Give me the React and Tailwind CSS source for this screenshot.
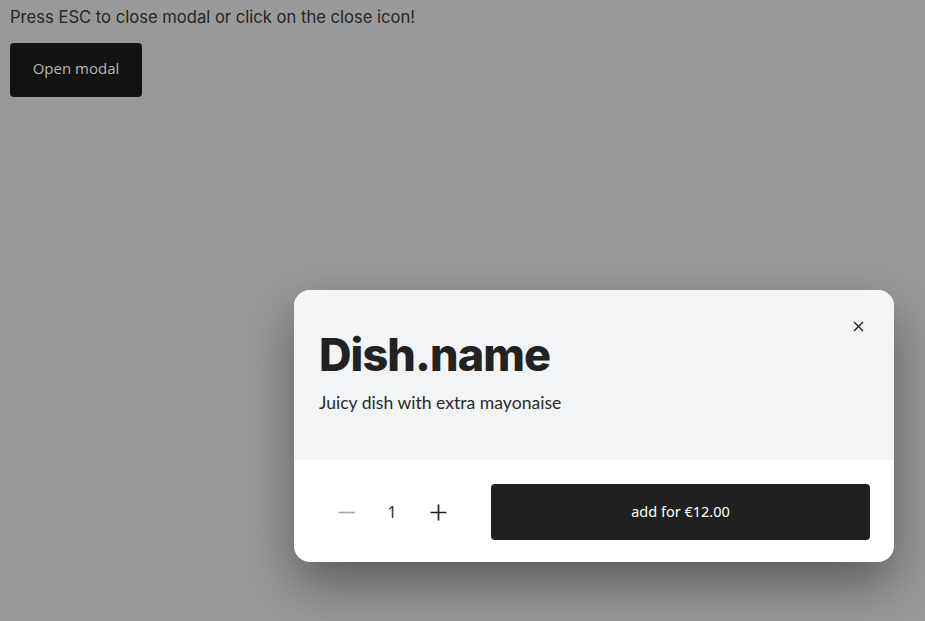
import React from "react";

export default function App() {
  return (
    <div className="relative min-h-[621px] w-full bg-[#999999] px-[10px] pt-[6px]">
      {/* PAGE CONTENT (behind overlay) */}
      <p
        className="text-[16.6px] leading-[22px] text-[#262626]"
        style={{ fontFamily: "Inter, sans-serif" }}
      >
        Press ESC to close modal or click on the close icon!
      </p>
      <button
        className="mt-[15px] flex h-[54px] w-[132px] items-center justify-center rounded bg-[#131313] pb-[3px] text-[15px] text-[#b8b8b8]"
        style={{ fontFamily: "'Open Sans', sans-serif" }}
      >
        Open modal
      </button>

      {/* MODAL */}
      <div className="absolute left-[294px] top-[290px] w-[600px] overflow-hidden rounded-2xl bg-white shadow-[0_22px_50px_rgba(0,0,0,0.4)]">
        {/* Header */}
        <div className="relative bg-[#f3f4f6] px-[25px] pt-[42px] pb-[45px]">
          <button className="absolute right-[24px] top-[24px] flex h-6 w-6 items-center justify-center text-[#222]">
            <svg width="11" height="11" viewBox="0 0 11 11" fill="none">
              <path d="M1 1L10 10M10 1L1 10" stroke="currentColor" strokeWidth="1.4" />
            </svg>
          </button>
          <h1
            className="text-[45px] font-extrabold leading-none tracking-[-0.02em] text-[#222]"
            style={{ fontFamily: "Inter, sans-serif" }}
          >
            Dish.name
          </h1>
          <p
            className="mt-[14px] text-[17.6px] leading-6 text-[#2a2a2a]"
            style={{ fontFamily: "Lato, sans-serif" }}
          >
            Juicy dish with extra mayonaise
          </p>
        </div>

        {/* Footer */}
        <div className="flex items-center pl-[25px] pr-6 pt-6 pb-[22px]">
          <div className="flex items-center gap-[6px] pl-[7px]">
            <button className="flex h-10 w-10 items-center justify-center text-[#a3a3a3]">
              <svg width="17" height="17" viewBox="0 0 17 17" fill="none">
                <path d="M0.5 8.5H16.5" stroke="currentColor" strokeWidth="1.6" />
              </svg>
            </button>
            <span
              className="flex h-10 w-10 items-center justify-center text-[16px] text-[#333]"
              style={{ fontFamily: "'Noto Sans', sans-serif" }}
            >
              1
            </span>
            <button className="flex h-10 w-10 items-center justify-center text-[#222]">
              <svg width="17" height="17" viewBox="0 0 17 17" fill="none">
                <path d="M0.5 8.5H16.5M8.5 0.5V16.5" stroke="currentColor" strokeWidth="1.7" />
              </svg>
            </button>
          </div>
          <button
            className="ml-[33px] flex h-14 flex-1 items-center justify-center rounded bg-[#202020] text-[14.5px] text-white"
            style={{ fontFamily: "'Noto Sans', sans-serif" }}
          >
            add for €12.00
          </button>
        </div>
      </div>
    </div>
  );
}
